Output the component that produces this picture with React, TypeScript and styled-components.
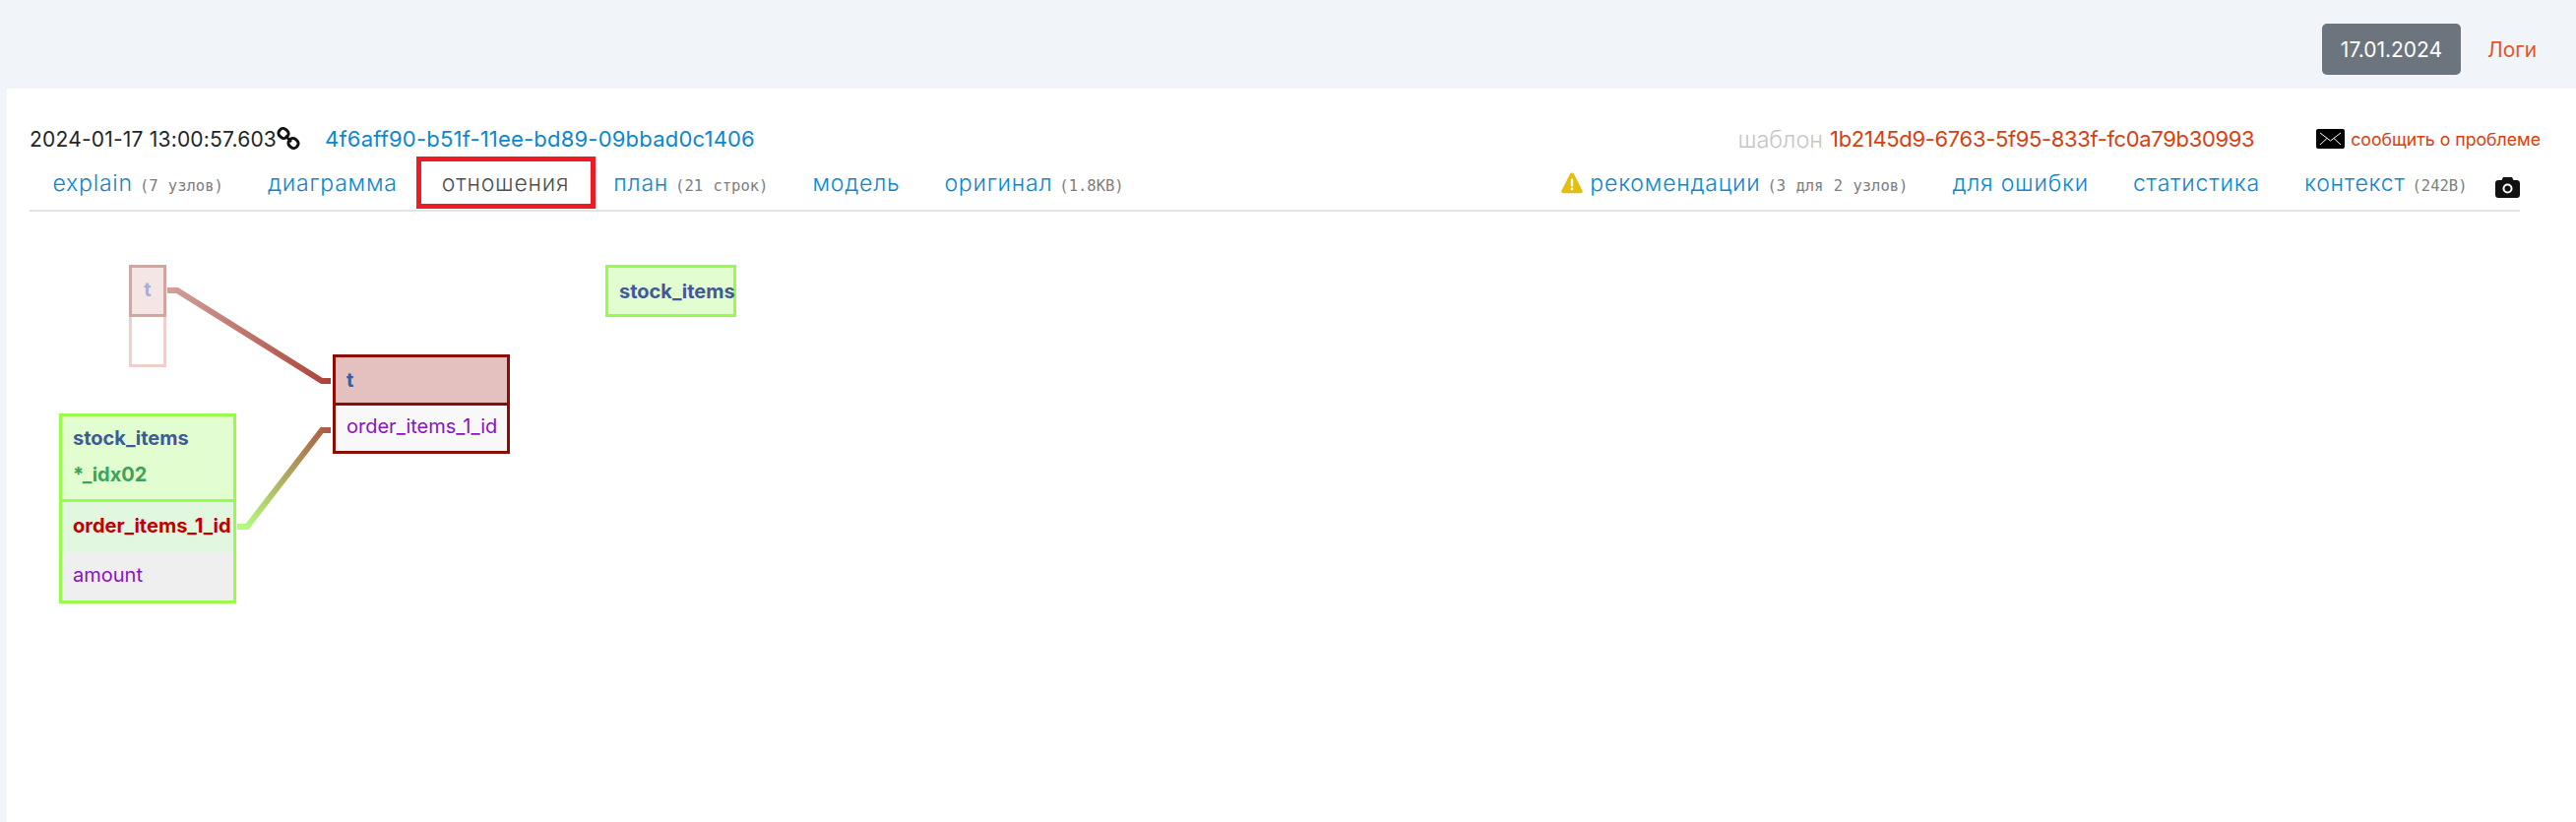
import React from 'react'
import styled, { createGlobalStyle } from 'styled-components'

const GlobalStyle = createGlobalStyle`
  html, body {
    margin: 0;
    padding: 0;
    background: #f1f5f9;
    font-family: Inter, "Noto Sans", sans-serif;
  }
`

const leftTabs = [
  { label: 'explain', note: '(7 узлов)' },
  { label: 'диаграмма' },
  { label: 'отношения', active: true },
  { label: 'план', note: '(21 строк)' },
  { label: 'модель' },
  { label: 'оригинал', note: '(1.8KB)' },
]

const rightTabs = [
  { label: 'рекомендации', note: '(3 для 2 узлов)', warn: true },
  { label: 'для ошибки' },
  { label: 'статистика' },
  { label: 'контекст', note: '(242B)' },
]

const ChainIcon = () => (
  <svg width="24" height="24" viewBox="0 0 24 24" fill="none" stroke="#111" strokeWidth="3">
    <rect x="2" y="2" width="10" height="9" rx="4" transform="rotate(40 7 6.5)" />
    <rect x="12" y="12" width="10" height="9" rx="4" transform="rotate(40 17 16.5)" />
    <path d="M9 9l6 6" strokeWidth="2.5" />
  </svg>
)

const WarnIcon = () => (
  <svg width="22" height="22" viewBox="0 0 22 22">
    <path d="M11 0.5c1 0 1.6.6 2 1.3l8.5 16.6c.7 1.5-.1 2.8-1.7 2.8H2.200c-1.600 0-2.400-1.300-1.700-2.800L9 1.800C9.400 1.100 10 .5 11 .5z" fill="#e5bd0c" />
    <rect x="9.800" y="6.500" width="2.400" height="8" rx="1" fill="#fff" />
    <circle cx="11" cy="17" r="1.400" fill="#fff" />
  </svg>
)

const MailIcon = () => (
  <svg width="29" height="20" viewBox="0 0 29 20">
    <rect width="29" height="20" rx="2" fill="#000" />
    <path d="M4 4l10.500 8L25 4M4 16l7-6.500M25 16l-7-6.500" fill="none" stroke="#fff" strokeWidth="1" />
  </svg>
)

const CameraIcon = () => (
  <svg width="25" height="21" viewBox="0 0 25 21">
    <path d="M8 0h9l1.500 3H22c1.700 0 3 1.300 3 3v12c0 1.700-1.300 3-3 3H3c-1.700 0-3-1.300-3-3V6c0-1.700 1.300-3 3-3h3.500z" fill="#111" />
    <circle cx="12.500" cy="11.500" r="5" fill="#fff" />
    <circle cx="12.500" cy="11.500" r="3" fill="#111" />
  </svg>
)

const Links = () => (
  <LinkLayer width="800" height="400" viewBox="0 0 800 400">
    <defs>
      <linearGradient id="linkTop" gradientUnits="userSpaceOnUse" x1="172" y1="0" x2="336" y2="0">
        <stop offset="0" stopColor="#d2a09b" />
        <stop offset="1" stopColor="#ab4239" />
      </linearGradient>
      <linearGradient id="linkBottom" gradientUnits="userSpaceOnUse" x1="245" y1="320" x2="333" y2="222">
        <stop offset="0" stopColor="#b4fd7c" />
        <stop offset="1" stopColor="#ac5c48" />
      </linearGradient>
    </defs>
    <path d="M170 80h10l147 92h9" fill="none" stroke="url(#linkTop)" strokeWidth="6" />
    <path d="M241 320h10l76-98h9" fill="none" stroke="url(#linkBottom)" strokeWidth="6" />
  </LinkLayer>
)

export default function App() {
  return (
    <>
      <GlobalStyle />
      <TopBar>
        <DateBadge>17.01.2024</DateBadge>
        <LogsLink>Логи</LogsLink>
      </TopBar>
      <Panel>
        <InfoRow>
          <InfoGroup>
            <Timestamp>2024-01-17 13:00:57.603</Timestamp>
            <ChainIcon />
            <Uuid>4f6aff90-b51f-11ee-bd89-09bbad0c1406</Uuid>
          </InfoGroup>
          <InfoGroup>
            <TemplateLabel>шаблон</TemplateLabel>
            <TemplateHash>1b2145d9-6763-5f95-833f-fc0a79b30993</TemplateHash>
            <Report>
              <MailIcon />
              <ReportText>сообщить о проблеме</ReportText>
            </Report>
          </InfoGroup>
        </InfoRow>
        <TabBar>
          <TabGroup>
            {leftTabs.map((tab) => (
              <Tab key={tab.label} $active={tab.active}>
                {tab.label}
                {tab.note && <TabNote>{tab.note}</TabNote>}
              </Tab>
            ))}
          </TabGroup>
          <TabGroup>
            {rightTabs.map((tab) => (
              <Tab key={tab.label}>
                {tab.warn && <WarnSlot><WarnIcon /></WarnSlot>}
                {tab.label}
                {tab.note && <TabNote>{tab.note}</TabNote>}
              </Tab>
            ))}
            <CameraSlot>
              <CameraIcon />
            </CameraSlot>
          </TabGroup>
        </TabBar>
        <Canvas>
          <Links />
          <FadedNode>
            <FadedHead>t</FadedHead>
            <FadedBody />
          </FadedNode>
          <Node $x={338} $y={145} $w={180} $color="#8b0d08">
            <NodeHead $bg="#e4c1bf" $color="#8b0d08" $h={52}>
              <TableName>t</TableName>
            </NodeHead>
            <Column $bg="#f8f8f8" $h={46}>order_items_1_id</Column>
          </Node>
          <Node $x={60} $y={205} $w={180} $color="#96fb4d">
            <NodeHead $bg="#e2fdcf" $color="#96fb4d" $h={90} $stack>
              <TableName>stock_items</TableName>
              <IndexName>*_idx02</IndexName>
            </NodeHead>
            <Column $bg="#e2f7e0" $h={51} $key>order_items_1_id</Column>
            <Column $bg="#efefef" $h={49}>amount</Column>
          </Node>
          <Node $x={615} $y={54} $w={133} $color="#96fb4d">
            <NodeHead $bg="#e2fdcf" $color="#96fb4d" $h={50} $last>
              <TableName>stock_items</TableName>
            </NodeHead>
          </Node>
        </Canvas>
      </Panel>
    </>
  )
}

const TopBar = styled.header`
  height: 90px;
  box-sizing: border-box;
  padding: 24px 40px 0 0;
  display: flex;
  justify-content: flex-end;
  align-items: flex-start;
  gap: 27px;
`

const DateBadge = styled.div`
  width: 141px;
  height: 52px;
  box-sizing: border-box;
  background: #6c757d;
  border-radius: 5px;
  color: #fff;
  font-size: 21px;
  display: flex;
  align-items: center;
  justify-content: center;
`

const LogsLink = styled.a`
  width: 50px;
  height: 52px;
  display: flex;
  align-items: center;
  color: #e0562a;
  font-size: 21px;
`

const Panel = styled.main`
  margin-left: 7px;
  height: 745px;
  box-sizing: border-box;
  background: #fff;
  padding: 33px 57px 0 23px;
  overflow: hidden;
`

const InfoRow = styled.div`
  height: 36px;
  display: flex;
  justify-content: space-between;
  align-items: center;
`

const InfoGroup = styled.div`
  display: flex;
  align-items: center;
`

const Timestamp = styled.span`
  color: #212529;
  font-size: 21px;
  letter-spacing: 0.2px;
`

const Uuid = styled.a`
  margin-left: 25px;
  color: #0a87cf;
  font-size: 22px;
  letter-spacing: 0.2px;
`

const TemplateLabel = styled.span`
  color: #c6c6c6;
  font-size: 23.500px;
  font-weight: 300;
`

const TemplateHash = styled.span`
  margin-left: 7px;
  color: #d9400f;
  font-size: 22px;
  letter-spacing: -0.35px;
`

const Report = styled.a`
  margin-left: 63px;
  margin-right: -21px;
  display: flex;
  align-items: center;
  gap: 6px;
`

const ReportText = styled.span`
  color: #d9400f;
  font-size: 17.700px;
`

const TabBar = styled.nav`
  height: 56px;
  box-sizing: border-box;
  border-bottom: 2px solid #e2e4e6;
  padding-left: 1px;
  display: flex;
  justify-content: space-between;
`

const TabGroup = styled.div`
  display: flex;
  align-items: center;
`

const Tab = styled.a<{ $active?: boolean }>`
  position: relative;
  padding: 0 22.500px;
  display: flex;
  align-items: baseline;
  color: ${(props) => (props.$active ? '#495057' : '#0a87cf')};
  font-size: 23px;
  font-weight: 300;
  letter-spacing: 0.8px;
  white-space: nowrap;

  ${(props) =>
    props.$active &&
    `&::after {
      content: '';
      position: absolute;
      left: -3px;
      right: -4px;
      top: -13px;
      bottom: -12px;
      border: 5px solid #ed1c24;
    }`}
`

const TabNote = styled.span`
  margin-left: 7px;
  color: #7d7d7d;
  font-family: "DejaVu Sans Mono", monospace;
  font-size: 15.500px;
  letter-spacing: 0;
  word-spacing: 1px;
`

const WarnSlot = styled.span`
  margin-right: 7px;
  align-self: center;
  display: flex;
`

const CameraSlot = styled.span`
  margin-left: 6px;
  margin-top: 8px;
  display: flex;
`

const Canvas = styled.section`
  position: relative;
  margin-left: -30px;
`

const LinkLayer = styled.svg`
  position: absolute;
  left: 0;
  top: 0;
`

const Node = styled.div<{ $x: number; $y: number; $w: number; $color: string }>`
  position: absolute;
  left: ${(props) => props.$x}px;
  top: ${(props) => props.$y}px;
  width: ${(props) => props.$w}px;
  box-sizing: border-box;
  border: 3px solid ${(props) => props.$color};
`

const FadedNode = styled.div`
  position: absolute;
  left: 131px;
  top: 54px;
  width: 38px;
`

const FadedHead = styled.div`
  height: 53px;
  box-sizing: border-box;
  border: 3px solid #d6a3a0;
  background: #f3e6e5;
  padding-bottom: 3px;
  display: flex;
  align-items: center;
  justify-content: center;
  color: #a5b0d2;
  font-size: 20px;
  font-weight: 700;
`

const FadedBody = styled.div`
  height: 51px;
  box-sizing: border-box;
  border: 3px solid #edcfcd;
  border-top: none;
`

const NodeHead = styled.div<{ $bg: string; $color: string; $h: number; $stack?: boolean; $last?: boolean }>`
  height: ${(props) => props.$h - 3}px;
  box-sizing: border-box;
  background: ${(props) => props.$bg};
  border-bottom: ${(props) => (props.$last ? 'none' : `3px solid ${props.$color}`)};
  padding: ${(props) => (props.$stack ? '10px 11px' : '0 11px')};
  display: flex;
  flex-direction: column;
  justify-content: ${(props) => (props.$stack ? 'flex-start' : 'center')};
  gap: 13px;
`

const TableName = styled.span`
  color: #3f5a9b;
  font-size: 20px;
  font-weight: 700;
  line-height: 24px;
  white-space: nowrap;
`

const IndexName = styled.span`
  color: #3ea35a;
  font-size: 20px;
  font-weight: 700;
  line-height: 24px;
`

const Column = styled.div<{ $bg: string; $h: number; $key?: boolean }>`
  height: ${(props) => props.$h}px;
  background: ${(props) => props.$bg};
  padding: 0 0 4px 11px;
  box-sizing: border-box;
  display: flex;
  align-items: center;
  color: ${(props) => (props.$key ? '#c00000' : '#8a12c4')};
  font-size: 20px;
  font-weight: ${(props) => (props.$key ? 700 : 400)};
  white-space: nowrap;
  overflow: hidden;
`
